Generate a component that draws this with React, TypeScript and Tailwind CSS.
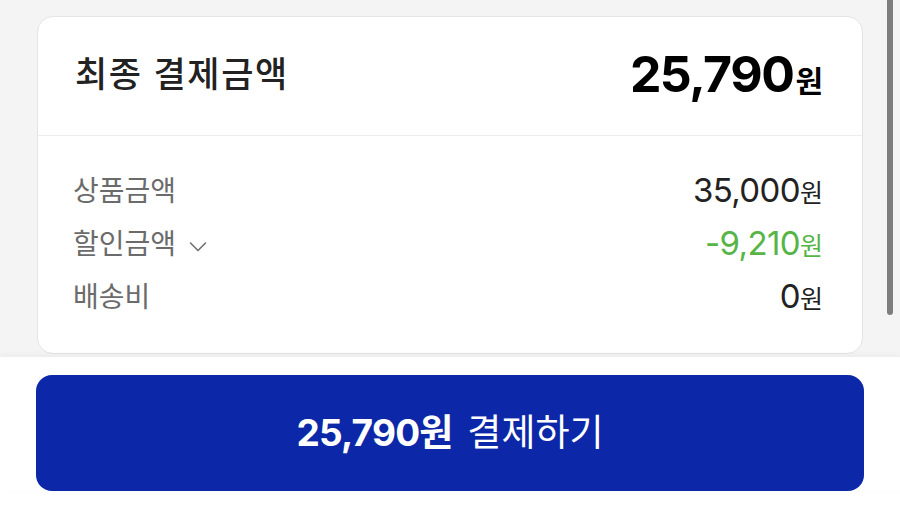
import React from 'react';

const font = { fontFamily: 'Inter, "Noto Sans CJK KR", sans-serif' };

type Row = { label: string; amount: string; tone?: 'green'; toggle?: boolean };

const rows: Row[] = [
  { label: '상품금액', amount: '35,000' },
  { label: '할인금액', amount: '-9,210', tone: 'green', toggle: true },
  { label: '배송비', amount: '0' },
];

const Chevron: React.FC = () => (
  <svg width="20" height="20" viewBox="0 0 20 20" className="ml-[12px] mt-1" fill="none">
    <path d="M2.5 7l7.5 7.5L17.5 7" stroke="#707070" strokeWidth="1.6" strokeLinecap="round" strokeLinejoin="round" />
  </svg>
);

const App: React.FC = () => {
  return (
    <div className="relative w-[900px] h-[509px] overflow-hidden bg-white" style={font}>
      {/* scroll area */}
      <div className="bg-[#f4f4f4] px-[37px] pt-4 pb-[3px]">
        <div className="bg-white rounded-[16px] border border-[#e4e4e4] h-[338px] flex flex-col">
          <div className="h-[119px] flex items-center justify-between pl-[37px] pr-[39px] border-b border-[#ededed]">
            <span className="text-[35px] font-medium text-[#222] tracking-[1.6px] mt-[-4px]">최종 결제금액</span>
            <span className="flex items-baseline text-black font-bold mt-[-4px]">
              <span className="text-[50px] tracking-[-1.5px]">25,790</span>
              <span className="text-[30px] ml-[2px]">원</span>
            </span>
          </div>
          <div className="flex flex-col pl-[35px] pr-[39px] pt-[38px] gap-[19px]">
            {rows.map((r) => (
              <div key={r.label} className="flex items-center justify-between h-[34px]">
                <span className="flex items-center text-[28px] text-[#6b6b6b] tracking-[0px]">
                  {r.label}
                  {r.toggle && <Chevron />}
                </span>
                <span
                  className={
                    'flex items-baseline ' +
                    (r.tone === 'green' ? 'text-[#56b546]' : 'text-[#222]')
                  }
                >
                  <span className="text-[33px] tracking-[-0.6px]">{r.amount}</span>
                  <span className="text-[25px]">원</span>
                </span>
              </div>
            ))}
          </div>
        </div>
      </div>

      {/* bottom pay bar */}
      <div className="relative bg-white px-[36px] pt-[18px] shadow-[0_-2px_6px_rgba(0,0,0,0.04)]">
        <button className="w-full h-[116px] rounded-[16px] bg-[#0c28a8] text-white flex items-center justify-center gap-[14px]">
          <span className="flex items-baseline font-bold">
            <span className="text-[37px] tracking-[-0.8px]">25,790</span>
            <span className="text-[37px]">원</span>
          </span>
          <span className="text-[37px]">결제하기</span>
        </button>
      </div>

      {/* overlay scrollbar */}
      <div className="absolute right-[7px] top-0 w-[6px] h-[315px] rounded-b-full bg-[#7d7d7d]" />
    </div>
  );
};

export default App;
